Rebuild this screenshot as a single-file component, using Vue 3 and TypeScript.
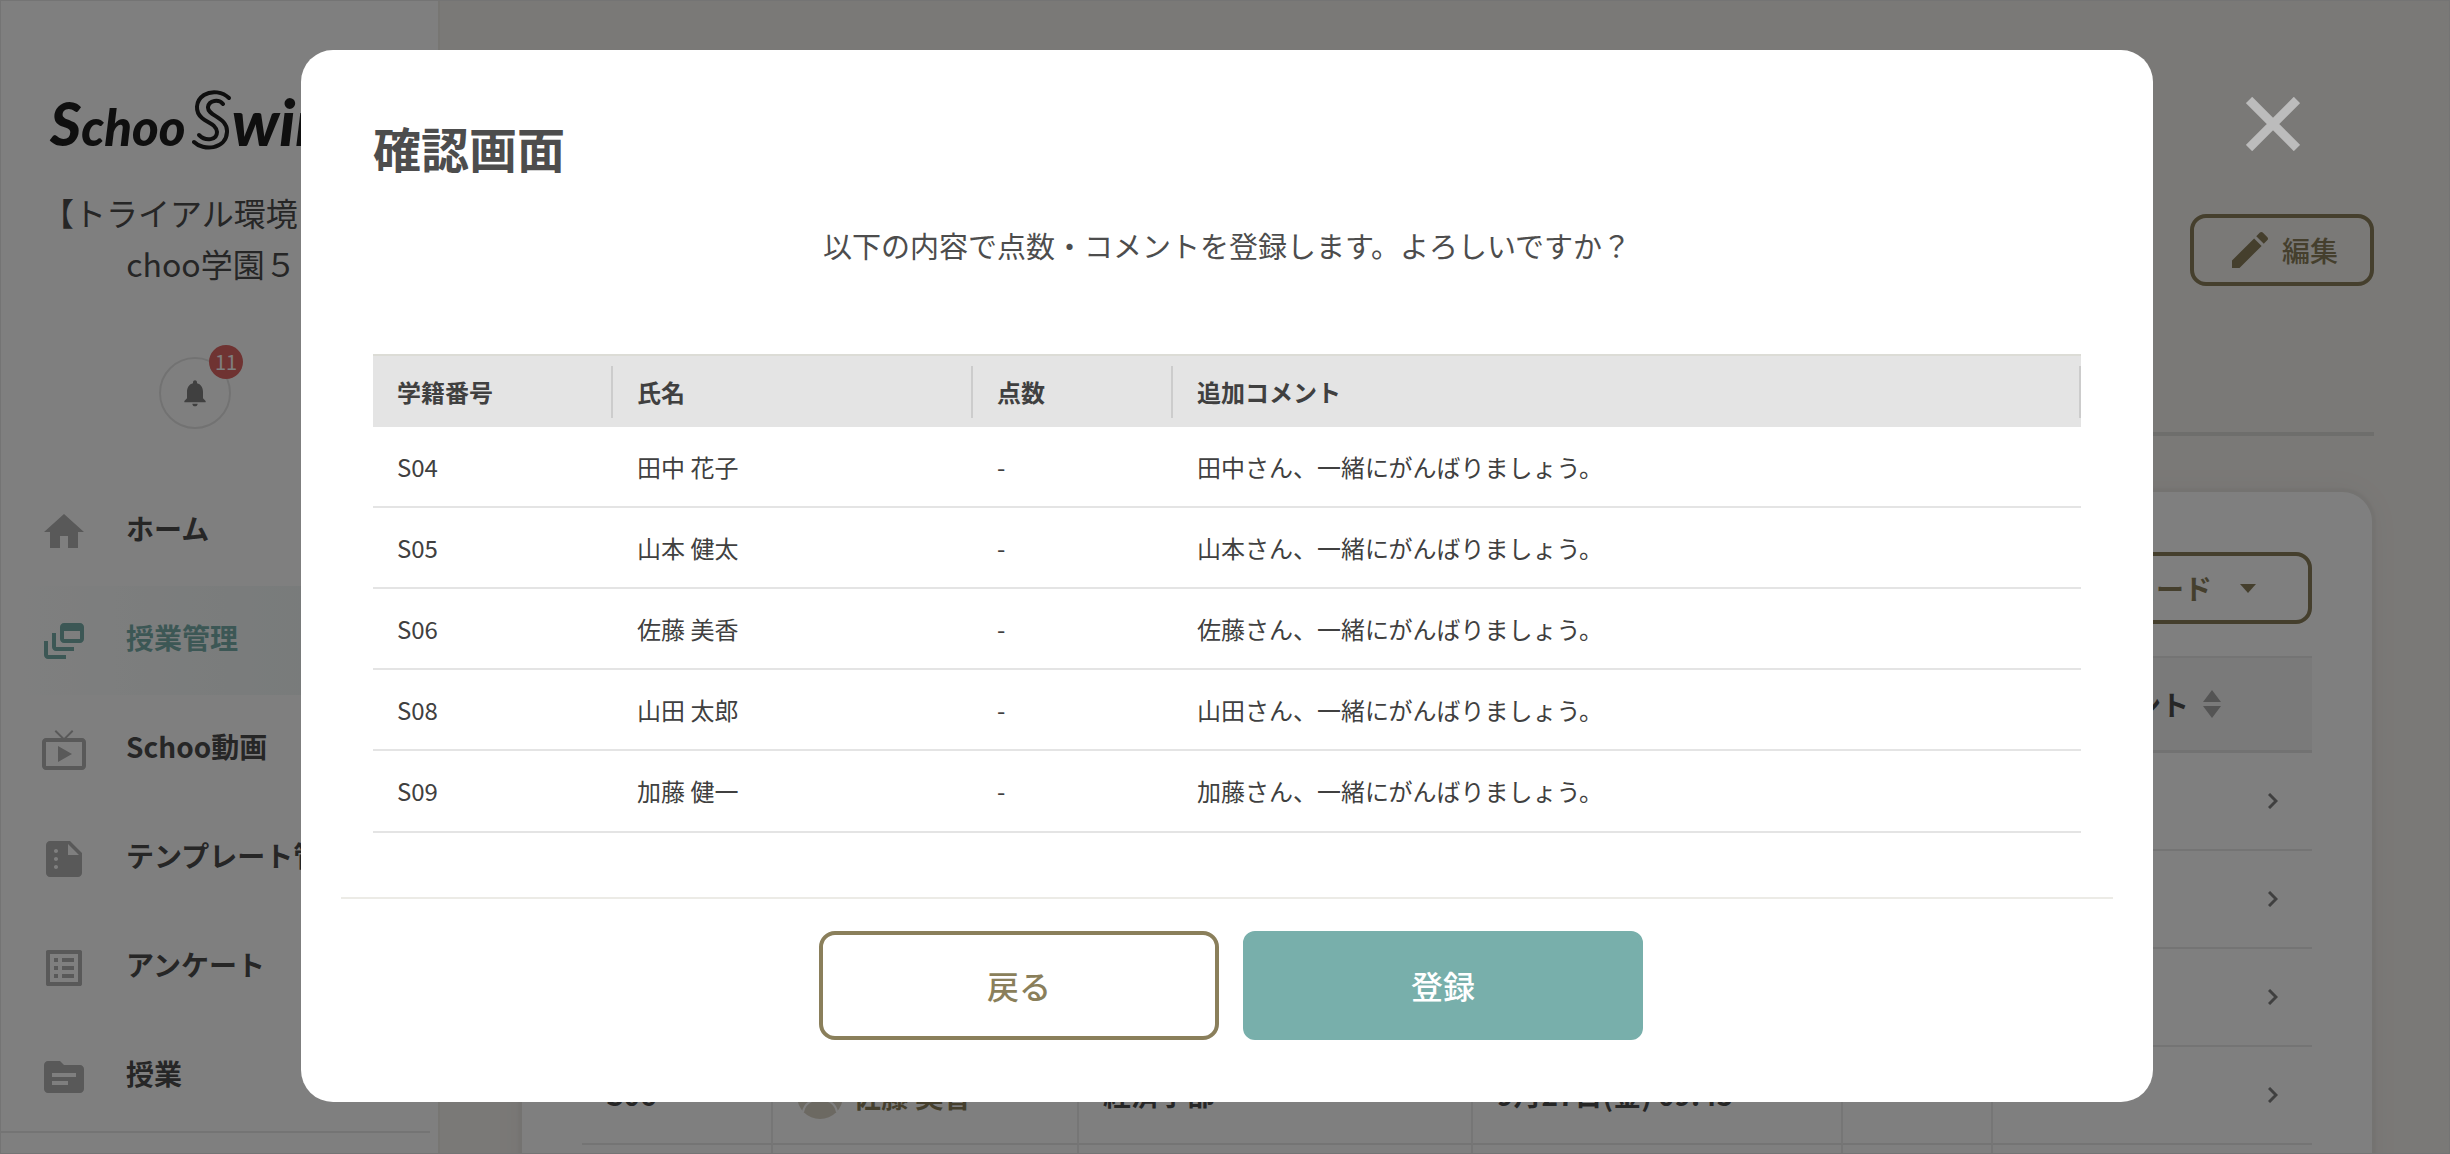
<script setup lang="ts">
interface NavItem {
  label: string
  icon: string
  active?: boolean
}

interface Student {
  id: string
  name: string
  score: string
  comment: string
}

interface Submission {
  id?: string
  name?: string
  faculty?: string
  submittedAt?: string
}

const navItems: NavItem[] = [
  { label: 'ホーム', icon: 'M10 20v-6h4v6h5v-8h3L12 3 2 12h3v8z' },
  {
    label: '授業管理',
    icon: 'M8 8H6v7c0 1.1.9 2 2 2h9v-2H8V8z M20 3h-8c-1.1 0-2 .9-2 2v6c0 1.1.9 2 2 2h8c1.1 0 2-.9 2-2V5c0-1.1-.9-2-2-2zm0 8h-8V7h8v4z M4 12H2v7c0 1.1.9 2 2 2h9v-2H4v-7z',
    active: true,
  },
  {
    label: 'Schoo動画',
    icon: 'M21 6h-7.59l3.29-3.29L16 2l-4 4-4-4-.7.71L10.59 6H3c-1.1 0-2 .89-2 2v12c0 1.1.9 2 2 2h18c1.1 0 2-.9 2-2V8c0-1.11-.9-2-2-2zm0 14H3V8h18v12zM9 10v8l7-4z',
  },
  {
    label: 'テンプレート管理',
    icon: 'M15 3H5c-1.1 0-1.99.9-1.99 2L3 19c0 1.1.89 2 1.99 2H19c1.1 0 2-.9 2-2V9l-6-6zM8 17c-.55 0-1-.45-1-1s.45-1 1-1 1 .45 1 1-.45 1-1 1zm0-4c-.55 0-1-.45-1-1s.45-1 1-1 1 .45 1 1-.45 1-1 1zm0-4c-.55 0-1-.45-1-1s.45-1 1-1 1 .45 1 1-.45 1-1 1zm6 1V4.5l5.5 5.5H14z',
  },
  {
    label: 'アンケート',
    icon: 'M19 5v14H5V5h14m1.1-2H3.9c-.5 0-.9.4-.9.9v16.2c0 .4.4.9.9.9h16.2c.4 0 .9-.5.9-.9V3.9c0-.5-.5-.9-.9-.9zM11 7h6v2h-6V7zm0 4h6v2h-6v-2zm0 4h6v2h-6zM7 7h2v2H7zm0 4h2v2H7zm0 4h2v2H7z',
  },
  {
    label: '授業',
    icon: 'M20 6h-8l-2-2H4c-1.1 0-1.99.9-1.99 2L2 18c0 1.1.9 2 2 2h16c1.1 0 2-.9 2-2V8c0-1.1-.9-2-2-2zm-6 10H6v-2h8v2zm4-4H6v-2h12v2z',
  },
]

const makeStudent = (id: string, family: string, given: string): Student => ({
  id,
  name: `${family} ${given}`,
  score: '-',
  comment: `${family}さん、一緒にがんばりましょう。`,
})

const students: Student[] = [
  makeStudent('S04', '田中', '花子'),
  makeStudent('S05', '山本', '健太'),
  makeStudent('S06', '佐藤', '美香'),
  makeStudent('S08', '山田', '太郎'),
  makeStudent('S09', '加藤', '健一'),
]

const submissions: Submission[] = [
  {},
  {},
  {},
  { id: 'S06', name: '佐藤 美香', faculty: '経済学部', submittedAt: '9月27日(金) 09:45' },
  {},
]
</script>

<template>
  <div class="app">
    <aside class="sidebar">
      <div class="logo" aria-label="Schoo Swing">
        <span class="logo-cap">S</span><span class="logo-small">choo</span>
        <svg class="logo-mark" viewBox="0 0 40 62" aria-hidden="true">
          <path d="M37 9C31 3 20 1 12 6C3 12 3 23 10 29C16 34 24 35 25 43C25 51 14 53 7 46" />
          <path d="M31 15C27 10 17 11 16 18C15 27 36 28 35 43C34 61 11 62 2 53" />
        </svg>
        <span class="logo-large">wing</span>
      </div>
      <p class="school">【トライアル環境５】S<br />choo学園５</p>
      <button class="bell" type="button" aria-label="お知らせ">
        <svg viewBox="0 0 24 24" aria-hidden="true">
          <path d="M12 22c1.1 0 2-.9 2-2h-4c0 1.1.9 2 2 2zm6-6v-5c0-3.07-1.64-5.64-4.5-6.32V4c0-.83-.67-1.5-1.5-1.5s-1.5.67-1.5 1.5v.68C7.63 5.36 6 7.92 6 11v5l-2 2v1h16v-1l-2-2z" />
        </svg>
        <span class="badge">11</span>
      </button>
      <nav class="nav">
        <a v-for="item in navItems" :key="item.label" href="#" class="nav-item" :class="{ active: item.active }">
          <svg viewBox="0 0 24 24" aria-hidden="true"><path :d="item.icon" /></svg>
          <span>{{ item.label }}</span>
        </a>
      </nav>
    </aside>

    <main class="main">
      <header class="page-head">
        <button class="outline-button edit" type="button">
          <svg viewBox="0 0 24 24" aria-hidden="true">
            <path d="M3 17.25V21h3.75L17.81 9.94l-3.75-3.75L3 17.25zM20.71 7.04c.39-.39.39-1.02 0-1.41l-2.34-2.34c-.39-.39-1.02-.39-1.41 0l-1.83 1.83 3.75 3.75 1.83-1.83z" />
          </svg>
          <span>編集</span>
        </button>
      </header>
      <section class="card">
        <div class="card-tools">
          <button class="outline-button download" type="button">
            <span>ダウンロード</span>
            <svg viewBox="0 0 16 9" aria-hidden="true"><path d="M0 0h16L8 9z" /></svg>
          </button>
        </div>
        <table class="list">
          <colgroup>
            <col class="l-id" /><col class="l-name" /><col class="l-faculty" /><col class="l-date" /><col class="l-score" /><col />
          </colgroup>
          <thead>
            <tr>
              <th></th>
              <th></th>
              <th></th>
              <th></th>
              <th></th>
              <th>
                <span class="sortable">
                  追加コメント
                  <svg viewBox="0 0 18 28" aria-hidden="true"><path d="M9 0l9 12H0zM0 16h18L9 28z" /></svg>
                </span>
              </th>
            </tr>
          </thead>
          <tbody>
            <tr v-for="(row, i) in submissions" :key="i">
              <td>{{ row.id }}</td>
              <td>
                <a v-if="row.name" href="#" class="person">
                  <svg viewBox="0 0 46 46" aria-hidden="true">
                    <circle cx="23" cy="23" r="23" class="avatar-bg" />
                    <circle cx="23" cy="17" r="9" class="avatar-line" />
                    <path d="M6 39C9 22 37 22 40 39" class="avatar-line" />
                  </svg>
                  <span>{{ row.name }}</span>
                </a>
              </td>
              <td>{{ row.faculty }}</td>
              <td>{{ row.submittedAt }}</td>
              <td></td>
              <td class="go">
                <svg viewBox="0 0 10 16" aria-hidden="true"><path d="M1 1l7 7-7 7" /></svg>
              </td>
            </tr>
          </tbody>
        </table>
      </section>
    </main>

    <div class="overlay">
      <section class="modal" role="dialog" aria-modal="true" aria-labelledby="dialog-title">
        <div class="modal-body">
          <h1 id="dialog-title">確認画面</h1>
          <p class="message">以下の内容で点数・コメントを登録します。よろしいですか？</p>
          <table class="confirm">
            <colgroup><col class="c-id" /><col class="c-name" /><col class="c-score" /><col /></colgroup>
            <thead>
              <tr>
                <th><span>学籍番号</span></th>
                <th><span>氏名</span></th>
                <th><span>点数</span></th>
                <th><span>追加コメント</span></th>
              </tr>
            </thead>
            <tbody>
              <tr v-for="s in students" :key="s.id">
                <td>{{ s.id }}</td>
                <td>{{ s.name }}</td>
                <td>{{ s.score }}</td>
                <td>{{ s.comment }}</td>
              </tr>
            </tbody>
          </table>
        </div>
        <footer class="modal-foot">
          <button class="action back" type="button">戻る</button>
          <button class="action submit" type="button">登録</button>
        </footer>
      </section>
      <button class="close" type="button" aria-label="閉じる">
        <svg viewBox="0 0 54 54" aria-hidden="true"><path d="M3 3l48 48M51 3L3 51" /></svg>
      </button>
    </div>
  </div>
</template>

<style>
body {
  margin: 0;
}
</style>

<style scoped>
.app,
.app * {
  box-sizing: border-box;
}

.app {
  position: relative;
  display: flex;
  height: 100vh;
  overflow: hidden;
  border: 1px solid #e8e8e8;
  background: #f5f2ee;
  color: #4d4d4d;
  font-family: 'Noto Sans CJK JP', sans-serif;
  font-size: 28px;
}

button {
  font-family: inherit;
  cursor: pointer;
}

/* Sidebar */
.sidebar {
  flex: none;
  display: flex;
  flex-direction: column;
  width: 439px;
  height: 1400px;
  border-right: 2px solid #efece7;
  background: #fff;
}

.logo {
  display: flex;
  align-items: baseline;
  height: 70px;
  margin: 86px 0 0 49px;
  color: #1e1e1e;
  font-family: Lato, sans-serif;
  font-weight: 900;
  font-style: italic;
  line-height: 70px;
}

.logo-cap {
  font-size: 60px;
}

.logo-small {
  font-size: 51px;
}

.logo-mark {
  flex: none;
  align-self: flex-start;
  width: 40px;
  height: 62px;
  margin: 2px 0 0 6px;
  fill: none;
  stroke: #1e1e1e;
  stroke-width: 4;
  stroke-linecap: round;
}

.logo-large {
  font-size: 64px;
}

.school {
  margin: 30px 16px 0 0;
  font-size: 32px;
  line-height: 51px;
  text-align: center;
  text-spacing-trim: space-all;
}

.bell {
  position: relative;
  display: grid;
  place-items: center;
  width: 72px;
  height: 72px;
  margin: 68px 0 0 158px;
  padding: 0;
  border: 2px solid #e5e5e5;
  border-radius: 50%;
  background: none;
}

.bell svg {
  width: 32px;
  height: 32px;
  fill: #808080;
}

.badge {
  position: absolute;
  top: -14px;
  right: -14px;
  width: 34px;
  height: 34px;
  border-radius: 50%;
  background: #de6664;
  color: #fff;
  font-size: 20px;
  line-height: 34px;
  text-align: center;
}

.nav {
  width: 429px;
  margin-top: 48px;
  border-bottom: 2px solid #e8e8e8;
}

.nav-item {
  display: flex;
  align-items: center;
  gap: 38px;
  height: 109px;
  padding-left: 39px;
  color: #4d4d4d;
  font-weight: 700;
  line-height: 40px;
  text-decoration: none;
  white-space: nowrap;
}

.nav-item svg {
  width: 48px;
  height: 48px;
  fill: #b2b2b2;
}

.nav-item span {
  padding-bottom: 8px;
}

.nav-item.active {
  background: linear-gradient(to right, rgba(120, 175, 171, 0), rgba(120, 175, 171, 0.14));
  color: #78afab;
}

.nav-item.active svg {
  fill: #78afab;
}

/* Page behind the dialog */
.main {
  flex: 1;
  min-width: 0;
  padding: 213px 75px 0 80px;
}

.page-head {
  display: flex;
  justify-content: flex-end;
  align-items: flex-start;
  height: 222px;
  border-bottom: 4px solid #dcdcd8;
}

.outline-button {
  display: flex;
  align-items: center;
  height: 72px;
  border: 4px solid #8a7f5b;
  border-radius: 16px;
  background: none;
  color: #8a7f5b;
  font-size: 28px;
}

.outline-button svg {
  fill: #8a7f5b;
}

.edit {
  gap: 8px;
  padding: 0 32px;
  font-weight: 500;
}

.edit svg {
  width: 48px;
  height: 48px;
}

.card {
  height: 900px;
  margin-top: 54px;
  padding: 60px 60px 0;
  border: 2px solid #e8e6e3;
  border-radius: 32px;
  background: #fff;
  box-shadow: 0 0 2px 2px #e9e6e2, 0 0 32px rgba(0, 0, 0, 0.04);
}

.card-tools {
  display: flex;
  justify-content: flex-end;
}

.download {
  gap: 28px;
  padding: 0 52px;
  font-weight: 700;
}

.download svg {
  width: 16px;
  height: 9px;
}

.list {
  width: 100%;
  margin-top: 32px;
  border-collapse: separate;
  border-spacing: 0;
  table-layout: fixed;
  font-weight: 700;
  text-align: left;
}

.l-id {
  width: 191px;
}

.l-name {
  width: 306px;
}

.l-faculty {
  width: 394px;
}

.l-date {
  width: 370px;
}

.l-score {
  width: 150px;
}

.list th {
  height: 97px;
  padding: 0 28px;
  border-top: 2px solid #e8e8e8;
  border-bottom: 3px solid #e4e4e4;
  background: #f4f4f4;
}

.list td {
  height: 98px;
  padding: 0 24px 2px;
  border-right: 2px solid #ececec;
  border-bottom: 2px solid #e8e8e8;
  white-space: nowrap;
}

.sortable {
  display: flex;
  align-items: center;
  gap: 14px;
}

.sortable svg {
  width: 18px;
  height: 28px;
  fill: #a8a8a8;
}

.person {
  display: flex;
  align-items: center;
  gap: 10px;
  padding-top: 4px;
  color: #8a7f5b;
  text-decoration: none;
}

.person svg {
  width: 46px;
  height: 46px;
}

.avatar-bg {
  fill: #d9d2c5;
}

.avatar-line {
  fill: none;
  stroke: #fff;
  stroke-width: 2;
}

.list .go {
  padding: 0 34px 0 0;
  border-right: 0;
}

.go svg {
  display: block;
  width: 10px;
  height: 16px;
  margin-left: auto;
  fill: none;
  stroke: #808080;
  stroke-width: 3;
}

/* Dialog */
.overlay {
  position: fixed;
  inset: 0;
  padding: 50px 297px 52px 301px;
  background: rgba(0, 0, 0, 0.5);
}

.modal {
  padding: 0 40px 62px;
  border-radius: 32px;
  background: #fff;
}

.modal-body {
  padding: 61px 32px 64px;
}

h1 {
  margin: 0;
  font-size: 48px;
  font-weight: 700;
  line-height: 72px;
}

.message {
  margin: 42px 0 89px;
  font-size: 29px;
  line-height: 40px;
  text-align: center;
}

.confirm {
  width: 100%;
  border-collapse: separate;
  border-spacing: 0;
  table-layout: fixed;
  color: #404040;
  font-size: 24px;
  line-height: 36px;
  text-align: left;
}

.c-id {
  width: 240px;
}

.c-name {
  width: 360px;
}

.c-score {
  width: 200px;
}

.confirm th {
  height: 73px;
  padding: 0;
  border-top: 2px solid #dcdcd6;
  background: #e4e4e4;
}

.confirm th span {
  display: block;
  height: 52px;
  padding-left: 24px;
  border-right: 2px solid #cccccc;
  line-height: 52px;
}

.confirm td {
  height: 81px;
  padding: 0 24px;
  border-bottom: 2px solid #e4e4e4;
}

.confirm tr:last-child td {
  height: 82px;
}

.modal-foot {
  display: flex;
  justify-content: center;
  gap: 24px;
  padding: 32px 0 0 8px;
  border-top: 2px solid #ecebe6;
}

.action {
  width: 400px;
  height: 109px;
  padding: 0 0 2px;
  border: 4px solid #8a7f5b;
  border-radius: 16px;
  background: #fff;
  color: #8a7f5b;
  font-size: 32px;
  font-weight: 500;
}

.submit {
  border-color: #78afab;
  border-radius: 12px;
  background: #78afab;
  color: #fff;
}

.close {
  position: absolute;
  top: 97px;
  right: 150px;
  padding: 0;
  border: 0;
  background: none;
}

.close svg {
  display: block;
  width: 54px;
  height: 54px;
  stroke: #bcbcbc;
  stroke-width: 9;
}
</style>
